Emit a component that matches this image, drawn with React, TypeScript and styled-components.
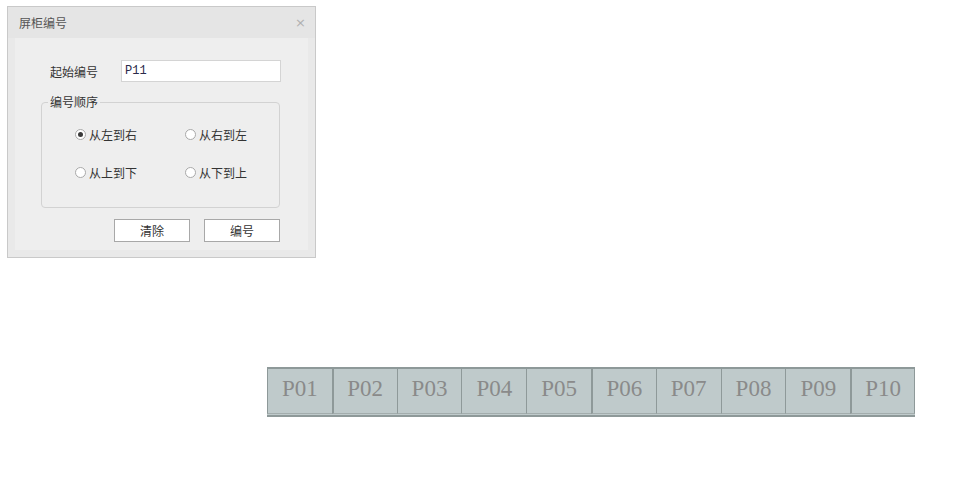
import styled, { createGlobalStyle } from "styled-components";

const GlobalStyle = createGlobalStyle`
  html, body {
    margin: 0;
    padding: 0;
    background: #ffffff;
  }
  body {
    font-family: "Noto Sans CJK SC", "Noto Sans", sans-serif;
    font-size: 12px;
    color: #333;
  }
`;

const Page = styled.div`
  width: 963px;
  height: 486px;
  padding: 6px 0 0 7px;
  box-sizing: border-box;
`;

const Dialog = styled.div`
  width: 309px;
  height: 252px;
  box-sizing: border-box;
  border: 1px solid #c9c9c9;
  background: #e9e9e9;
  display: flex;
  flex-direction: column;
`;

const TitleBar = styled.div`
  height: 31px;
  flex-shrink: 0;
  background: #e5e5e5;
  display: flex;
  align-items: center;
  justify-content: space-between;
  padding: 0 9px 0 11px;
  color: #555;
  font-size: 12px;
`;

const CloseBtn = styled.span`
  color: #b0b0b0;
  font-family: "DejaVu Sans", sans-serif;
  font-size: 13px;
  line-height: 1;
  cursor: pointer;
`;

const Frame = styled.div`
  flex: 1;
  padding: 0 7px 7px 7px;
  display: flex;
`;

const Inner = styled.div`
  flex: 1;
  min-width: 0;
  background: #eeeeee;
  padding: 22px 0 0 26px;
  display: flex;
  flex-direction: column;
`;

const FieldRow = styled.div`
  display: flex;
  align-items: center;
  height: 22px;
  padding-left: 9px;
`;

const Label = styled.span`
  width: 71px;
  color: #333;
`;

const TextInput = styled.input`
  width: 160px;
  height: 22px;
  box-sizing: border-box;
  border: 1px solid #d4d4d4;
  background: #fff;
  padding: 0 3px;
  font-family: "Liberation Mono", monospace;
  font-size: 12px;
  color: #2a2a4a;
  outline: none;
`;

const Group = styled.fieldset`
  width: 239px;
  box-sizing: border-box;
  margin: 12px 0 0 0;
  padding: 14px 0 25px 6px;
  border: 1px solid #d2d2d2;
  border-radius: 4px;
  min-width: 0;
`;

const Legend = styled.legend`
  padding: 0 2px;
  font-size: 12px;
  line-height: 16px;
  color: #333;
`;

const RadioGrid = styled.div`
  display: grid;
  grid-template-columns: 110px auto;
  row-gap: 18px;
  padding-left: 27px;
`;

const RadioItem = styled.label`
  display: flex;
  align-items: center;
  height: 20px;
  gap: 3px;
  color: #333;
  cursor: pointer;
`;

const RadioDot = styled.span<{ $checked?: boolean }>`
  width: 11px;
  height: 11px;
  box-sizing: border-box;
  border-radius: 50%;
  border: 1px solid #a9a9a9;
  background: #fff;
  display: flex;
  align-items: center;
  justify-content: center;
  &::after {
    content: "";
    width: 5px;
    height: 5px;
    border-radius: 50%;
    background: ${(p) => (p.$checked ? "#3a3a3a" : "transparent")};
  }
`;

const ButtonRow = styled.div`
  width: 239px;
  display: flex;
  justify-content: flex-end;
  gap: 14px;
  margin-top: 11px;
`;

const Button = styled.button`
  width: 76px;
  height: 23px;
  box-sizing: border-box;
  border: 1px solid #a8a8a8;
  background: #fff;
  font-family: "Noto Sans CJK SC", sans-serif;
  font-size: 12px;
  color: #333;
  padding: 0;
  cursor: pointer;
`;

const Strip = styled.div`
  margin: 109px 0 0 260px;
  width: 648px;
  height: 50px;
  box-sizing: border-box;
  border-top: 2px solid #8e9999;
  border-bottom: 2px solid #8e9999;
  display: grid;
  grid-template-columns: repeat(10, 1fr);
  background: #bfcacb;
`;

const Cell = styled.div<{ $thick?: boolean }>`
  border-left: ${(p) => (p.$thick ? "2px" : "1px")} solid #8e9999;
  border-bottom: 1px solid #a3adad;
  margin-bottom: 1px;
  display: flex;
  align-items: center;
  justify-content: center;
  font-family: "Liberation Serif", serif;
  font-size: 23px;
  color: #8a8a8a;
  padding-bottom: 4px;
  &:last-child {
    border-right: 1px solid #8e9999;
  }
`;

const radios = [
  { text: "从左到右", checked: true },
  { text: "从右到左", checked: false },
  { text: "从上到下", checked: false },
  { text: "从下到上", checked: false },
];

const cabinets = ["P01", "P02", "P03", "P04", "P05", "P06", "P07", "P08", "P09", "P10"];

export default function App() {
  return (
    <Page>
      <GlobalStyle />
      <Dialog>
        <TitleBar>
          <span>屏柜编号</span>
          <CloseBtn>×</CloseBtn>
        </TitleBar>
        <Frame>
          <Inner>
            <FieldRow>
              <Label>起始编号</Label>
              <TextInput defaultValue="P11" />
            </FieldRow>
            <Group>
              <Legend>编号顺序</Legend>
              <RadioGrid>
                {radios.map((r) => (
                  <RadioItem key={r.text}>
                    <RadioDot $checked={r.checked} />
                    {r.text}
                  </RadioItem>
                ))}
              </RadioGrid>
            </Group>
            <ButtonRow>
              <Button>清除</Button>
              <Button>编号</Button>
            </ButtonRow>
          </Inner>
        </Frame>
      </Dialog>
      <Strip>
        {cabinets.map((c, i) => (
          <Cell key={c} $thick={i === 1 || i === 5 || i === 9}>
            {c}
          </Cell>
        ))}
      </Strip>
    </Page>
  );
}
